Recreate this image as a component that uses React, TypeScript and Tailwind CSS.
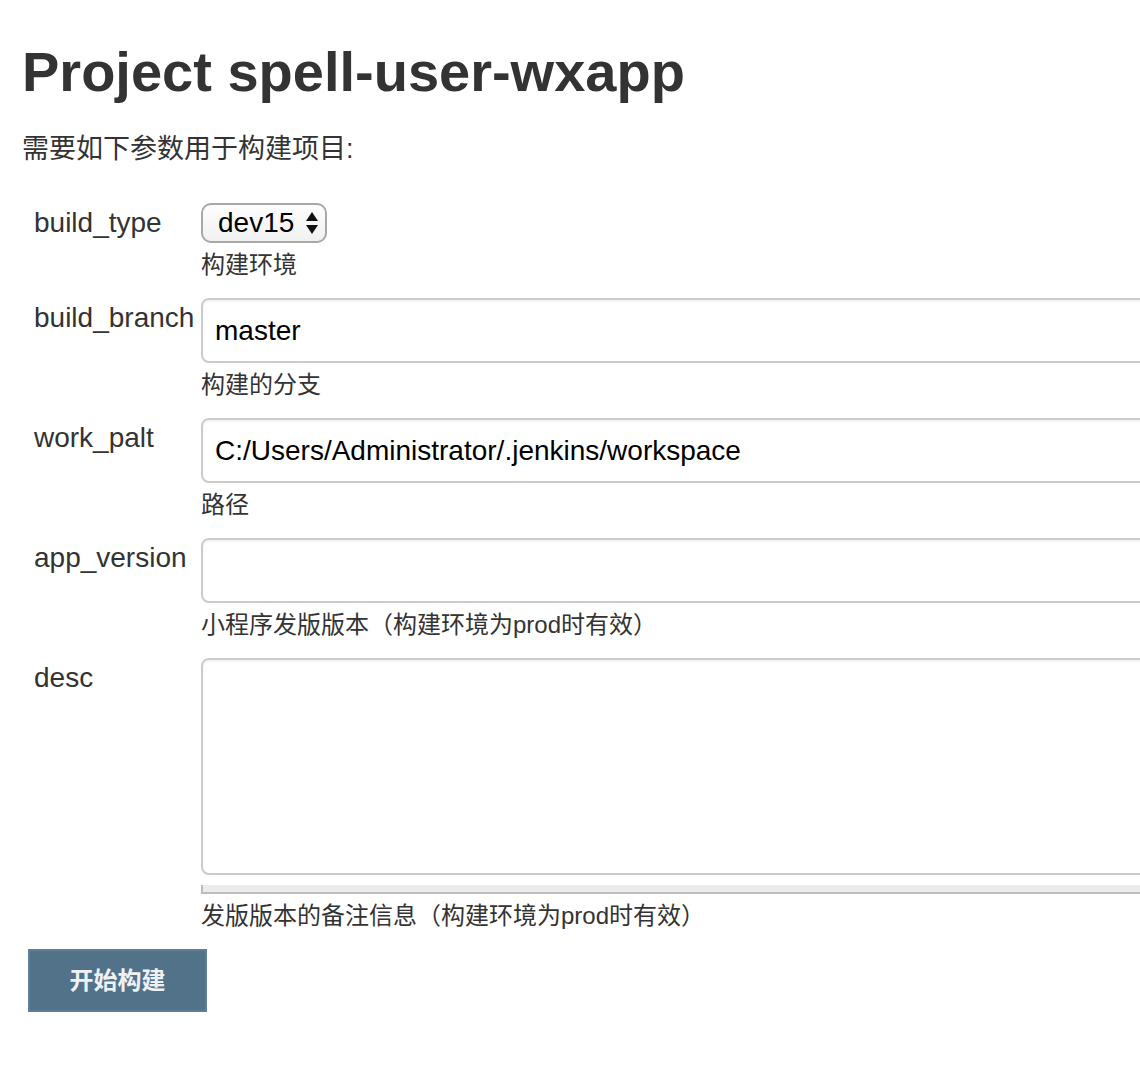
import { useState } from 'react';

const FONT = "font-['Liberation_Sans','Noto_Sans_CJK_SC',sans-serif]";

const inputCls =
  'block h-[65px] w-[1000px] shrink-0 rounded-[8px] border-2 border-[#cbcbcb] bg-white px-[12px] text-[28px] text-black shadow-[inset_0_2px_2px_rgba(0,0,0,0.05)] outline-none';

function Row({ label, help, children }: { label: string; help: string; children: React.ReactNode }) {
  return (
    <div className="mb-[19px] flex items-start">
      <div className="w-[179px] shrink-0 pl-[12px] pt-[4px] text-[28px] leading-[32px] text-[#333]">{label}</div>
      <div className="min-w-0 flex-1">
        {children}
        <div className="mt-[8px] text-[24px] leading-[28px] text-[#333]">{help}</div>
      </div>
    </div>
  );
}

export default function App() {
  const [buildType, setBuildType] = useState('dev15');
  const [branch, setBranch] = useState('master');
  const [path, setPath] = useState('C:/Users/Administrator/.jenkins/workspace');
  const [version, setVersion] = useState('');
  const [desc, setDesc] = useState('');

  return (
    <div className={`${FONT} min-h-[1072px] w-full overflow-hidden bg-white pl-[22px] text-[#333]`}>
      <h1 className="pt-[40px] text-[56px] font-bold leading-[64px] text-[#333]">Project spell-user-wxapp</h1>
      <p className="mt-[29px] text-[27px] leading-[32px] text-[#333]">需要如下参数用于构建项目:</p>

      <form className="mt-[38px]" onSubmit={(e) => e.preventDefault()}>
        <Row label="build_type" help="构建环境">
          <div className="relative w-[126px]">
            <select
              value={buildType}
              onChange={(e) => setBuildType(e.target.value)}
              className="block h-[40px] w-[126px] appearance-none rounded-[10px] border-2 border-[#a8a8a8] bg-gradient-to-b from-[#fdfdfd] to-[#f1f1f1] pl-[15px] text-[28px] leading-[36px] text-black outline-none"
            >
              <option value="dev15">dev15</option>
              <option value="prod">prod</option>
            </select>
            <svg className="pointer-events-none absolute right-[9px] top-[9px]" width="12" height="22" viewBox="0 0 12 22">
              <path d="M6 0 L12 9 L0 9 Z" fill="#111" />
              <path d="M6 22 L12 13 L0 13 Z" fill="#111" />
            </svg>
          </div>
        </Row>

        <Row label="build_branch" help="构建的分支">
          <input value={branch} onChange={(e) => setBranch(e.target.value)} className={inputCls} />
        </Row>

        <Row label="work_palt" help="路径">
          <input value={path} onChange={(e) => setPath(e.target.value)} className={inputCls} />
        </Row>

        <Row label="app_version" help="小程序发版版本（构建环境为prod时有效）">
          <input value={version} onChange={(e) => setVersion(e.target.value)} className={inputCls} />
        </Row>

        <Row label="desc" help="发版版本的备注信息（构建环境为prod时有效）">
          <textarea
            value={desc}
            onChange={(e) => setDesc(e.target.value)}
            className="block h-[217px] w-[1000px] shrink-0 resize-none rounded-[8px] border-2 border-[#cbcbcb] bg-white px-[12px] text-[28px] text-black shadow-[inset_0_2px_2px_rgba(0,0,0,0.05)] outline-none"
          />
          <div className="mt-[10px] h-[9px] w-[1000px] border-b-2 border-l-2 border-[#bdbdbd] bg-[#ececec]" />
        </Row>

        <button
          type="submit"
          className="ml-[6px] h-[63px] w-[179px] border-2 border-[#5f7f94] bg-[#52728a] text-[24px] font-bold text-[#eef1f3]"
        >
          开始构建
        </button>
      </form>
    </div>
  );
}
